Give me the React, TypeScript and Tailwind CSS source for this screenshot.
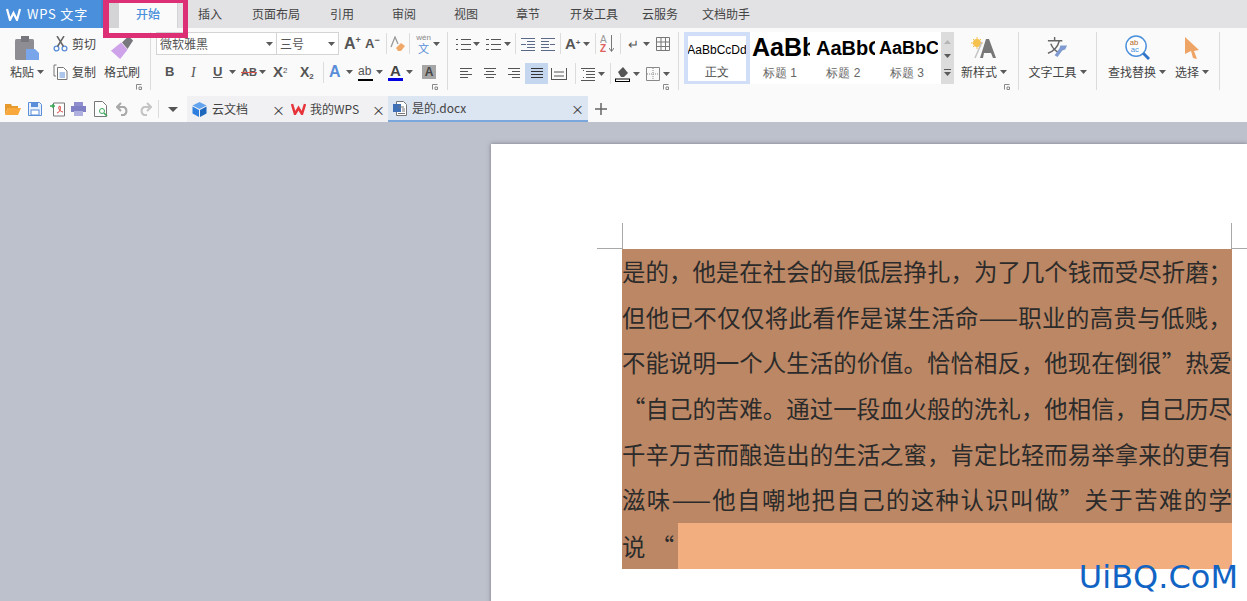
import React from "react";

const Caret = ({ className = "" }: { className?: string }) => (
  <svg width="7" height="4" viewBox="0 0 7 4" className={"shrink-0 " + className}><path d="M0 0h7L3.5 4z" fill="#5a5a5a" /></svg>
);

const Launcher = ({ className }: { className: string }) => (
  <svg width="6" height="6" viewBox="0 0 6 6" className={"absolute " + className}><path d="M.5 5.5v-5h5M3 3h2.5v2.5H3z" fill="none" stroke="#888" /></svg>
);

const VDiv = () => <div className="w-px h-[21px] bg-[#dcdcdc] shrink-0" />;

const Lines = ({ rows, w = 14, color = "#555" }: { rows: [number, number, number][]; w?: number; color?: string }) => (
  <svg width={w} height="14" viewBox={`0 0 ${w} 14`}>
    {rows.map(([x, y, l], i) => <rect key={i} x={x} y={y} width={l} height="1" fill={color} />)}
  </svg>
);

const tabs: [string, string][] = [
  ["插入", "w-[64px]"], ["页面布局", "w-[68px]"], ["引用", "w-[64px]"], ["审阅", "w-[60px]"], ["视图", "w-[64px]"],
  ["章节", "w-[60px]"], ["开发工具", "w-[72px]"], ["云服务", "w-[60px]"], ["文档助手", "w-[72px]"],
];

const doc = [
  "是的\uFF0C他是在社会的最低层挣扎\uFF0C为了几个钱而受尽折磨\uFF1B",
  "但他已不仅仅将此看作是谋生活命\u2014\u2014职业的高贵与低贱\uFF0C",
  "不能说明一个人生活的价值\u3002恰恰相反\uFF0C他现在倒很\u201D热爱",
  "\u201C自己的苦难\u3002通过一段血火般的洗礼\uFF0C他相信\uFF0C自己历尽",
  "千辛万苦而酿造出的生活之蜜\uFF0C肯定比轻而易举拿来的更有",
  "滋味\u2014\u2014他自嘲地把自己的这种认识叫做\u201D关于苦难的学",
];

function TitleBar() {
  return (
    <div className="h-[28px] bg-[#e2e2e4] flex shrink-0 text-[12px] text-[#444]">
      <div className="w-[101px] bg-[#4a8fdb] flex items-center pl-[6px] gap-[6px] text-white text-[13px]">
        <svg width="15" height="13" viewBox="0 0 15 13"><path d="M1 1l3 11 3.5-7L11 12l3-11" fill="none" stroke="#fff" strokeWidth="2.2" /></svg>
        <span className="tracking-[0.8px] whitespace-nowrap">WPS 文字</span>
      </div>
      <div className="w-[8px] bg-[#4584cf]" />
      <div className="w-[10px] bg-[#d4d4d6]" />
      <div className="w-[58px] bg-[#fafafa] flex items-center justify-center text-[#4a8fdb] font-medium">开始</div>
      <div className="w-[1px] bg-[#d4d4d6]" />
      {tabs.map(([t, w]) => (
        <div key={t} className={w + " flex items-center justify-center"}>{t}</div>
      ))}
    </div>
  );
}

function Clipboard() {
  return (
    <div className="relative w-[151px] h-[58px] border-r border-[#dcdcdc] flex shrink-0 pl-[8px] text-[12px]">
      <div className="w-[38px] flex flex-col items-center">
        <svg width="24" height="24" viewBox="0 0 24 24" className="mt-[4px]">
          <rect x="0" y="3" width="19" height="21" rx="1.5" fill="#8d8d93" />
          <rect x="6" y="0" width="8" height="6" fill="#77777d" />
          <path d="M11 13h9l4 4v7H11z" fill="#79a5ea" />
        </svg>
        <div className="flex items-center gap-[3px] mt-[3px] h-[18px]">粘贴<Caret /></div>
      </div>
      <div className="ml-[7px] w-[45px] flex flex-col">
        <div className="flex items-center h-[22px] mt-[1px] gap-[4px]">
          <svg width="15" height="16" viewBox="0 0 15 16">
            <circle cx="3.5" cy="12.5" r="2.4" fill="none" stroke="#5a8ed8" strokeWidth="1.3" />
            <circle cx="11.5" cy="12.5" r="2.4" fill="none" stroke="#5a8ed8" strokeWidth="1.3" />
            <path d="M4.5 10.5L11 0M10.5 10.5L4 0" stroke="#666" strokeWidth="1.5" />
          </svg>
          <span>剪切</span>
        </div>
        <div className="flex items-center h-[22px] mt-[6px] gap-[4px]">
          <svg width="15" height="16" viewBox="0 0 15 16">
            <path d="M3.5 1H1v11h2" fill="none" stroke="#777" />
            <path d="M4.5 3.5h6l3.5 3.5v8.5H4.500z" fill="#fff" stroke="#777" />
            <path d="M6.500 9h5.500M6.500 11h5.500M6.500 13h5.500" stroke="#5a8ed8" />
          </svg>
          <span>复制</span>
        </div>
      </div>
      <div className="ml-[6px] w-[36px] flex flex-col items-center">
        <svg width="24" height="24" viewBox="0 0 26 26" className="mt-[4px]">
          <path d="M1 16L12 7l7 8-8 10z" fill="#cfa3ea" />
          <path d="M13 7l7-7 5 5-6 9z" fill="#77777d" />
        </svg>
        <div className="mt-[3px] h-[18px] flex items-center whitespace-nowrap">格式刷</div>
      </div>
      <Launcher className="right-[8px] bottom-0" />
    </div>
  );
}

function FontGroup() {
  return (
    <div className="relative w-[297px] h-[58px] border-r border-[#dcdcdc] pl-[5px] shrink-0 text-[#555]">
      <div className="flex items-center h-[23px]">
        <div className="w-[121px] h-[23px] bg-white border border-[#d4d4d4] flex items-center justify-between pl-[3px] pr-[3px] text-[12px]">微软雅黑<Caret /></div>
        <div className="w-[62px] h-[23px] bg-white border border-l-0 border-[#d4d4d4] flex items-center justify-between pl-[3px] pr-[3px] text-[12px]">三号<Caret /></div>
        <div className="w-[21px] ml-[5px] font-['Liberation_Sans',sans-serif] text-[16px] font-bold flex items-start leading-[16px]">A<span className="text-[9px] leading-[8px]">+</span></div>
        <div className="w-[21px] font-['Liberation_Sans',sans-serif] text-[13px] font-bold flex items-start leading-[16px]">A<span className="text-[9px] leading-[8px]">−</span></div>
        <VDiv />
        <svg width="16" height="16" viewBox="0 0 16 16" className="ml-[3px]"><path d="M1 11L5 1l3 7" fill="none" stroke="#999" strokeWidth="1.3" /><path d="M6 12l5-5 4 3-4 5H8z" fill="#f0a868" /></svg>
        <div className="ml-[3px]"><VDiv /></div>
        <div className="ml-[5px] w-[17px] flex flex-col items-center leading-none">
          <span className="text-[8px] leading-[9px] font-['Liberation_Sans',sans-serif] text-[#888]">wén</span>
          <span className="text-[11px] leading-[12px] text-[#5a8ed8]">文</span>
        </div>
        <Caret className="ml-[1px]" />
      </div>
      <div className="flex items-center h-[22px] mt-[6px] text-[13px] font-['Liberation_Sans',sans-serif]">
        <span className="w-[26px] pl-[9px] font-bold">B</span>
        <span className="w-[25px] pl-[9px] italic font-['Liberation_Serif',serif] text-[14px]">I</span>
        <span className="w-[22px] pl-[6px] underline font-bold">U</span>
        <Caret />
        <span className="w-[23px] pl-[5px] text-[11px] font-bold line-through decoration-[#d9534f]">AB</span>
        <Caret />
        <span className="w-[29px] pl-[7px] font-bold text-[15px] whitespace-nowrap">X<sup className="text-[8px] font-normal">2</sup></span>
        <span className="w-[23px] pl-[5px] font-bold text-[14px] whitespace-nowrap">X<sub className="text-[8px]">2</sub></span>
        <span className="ml-[5px]"><VDiv /></span>
        <span className="w-[19px] pl-[5px] font-bold text-[16px] text-[#5a8ed8]">A</span>
        <Caret className="ml-[3px]" />
        <span className="w-[15px] text-[12px] border-b-2 border-black h-[17px] leading-[14px] ml-[5px]">ab</span>
        <Caret className="ml-[3px]" />
        <span className="w-[15px] ml-[5px] flex flex-col leading-[15px] font-bold text-[15px] text-[#444] items-center">A<span className="block w-[15px] h-[3px] bg-[#0000e0]" /></span>
        <Caret className="ml-[3px]" />
        <span className="ml-[9px] w-[14px] h-[14px] bg-[#a6a6a6] flex items-center justify-center font-bold text-[12px] text-[#444]">A</span>
      </div>
      <Launcher className="right-[9px] bottom-0" />
    </div>
  );
}

function ParaGroup() {
  return (
    <div className="relative w-[231px] h-[58px] border-r border-[#dcdcdc] pl-[8px] shrink-0">
      <div className="flex items-center h-[23px]">
        <Lines w={15} rows={[[0,2,2],[5,2,10],[0,7,2],[5,7,10],[0,12,2],[5,12,10]]} />
        <Caret className="ml-[2px]" />
        <div className="w-[6px]" />
        <Lines w={15} rows={[[0,2,3],[5,2,10],[0,7,3],[5,7,10],[0,12,3],[5,12,10]]} />
        <Caret className="ml-[3px]" />
        <div className="w-[4px]" />
        <VDiv />
        <div className="w-[5px]" />
        <Lines w={14} rows={[[0,1,14],[6,4,8],[0,7,5],[6,7,8],[6,10,8],[0,13,14]]} color="#5a6a88" />
        <div className="w-[6px]" />
        <Lines w={14} rows={[[0,1,14],[0,4,8],[9,7,5],[0,7,8],[0,10,8],[0,13,14]]} color="#5a6a88" />
        <div className="w-[5px]" />
        <VDiv />
        <span className="w-[20px] pl-[4px] font-['Liberation_Sans',sans-serif] font-bold text-[15px] text-[#555] leading-none whitespace-nowrap">A<sup className="text-[8px]">+</sup></span>
        <Caret className="ml-[2px]" />
        <div className="w-[5px]" />
        <VDiv />
        <span className="w-[24px] pl-[4px] flex items-center gap-[2px] font-['Liberation_Sans',sans-serif]">
          <span className="flex flex-col text-[10px] leading-[9px]"><span className="text-[#999]">A</span><span className="text-[#e06060] font-bold">Z</span></span>
          <svg width="5" height="17" viewBox="0 0 5 17"><path d="M2.500 0v16M0 13l2.500 3.500L5 13" fill="none" stroke="#777" /></svg>
        </span>
        <VDiv />
        <span className="w-[13px] ml-[7px] text-[13px] text-[#555] leading-none">↵</span>
        <Caret className="ml-[2px]" />
        <svg width="14" height="14" viewBox="0 0 14 14" className="ml-[6px]"><path d="M.5 .5h13v13H.5zM.5 5h13M.5 9.500h13M5 .5v13M9.500 .5v13" fill="none" stroke="#777" /></svg>
      </div>
      <div className="flex items-center h-[21px] mt-[8px]">
        <div className="w-[4px]" />
        <Lines w={12} rows={[[0,1,12],[0,4,8],[0,7,12],[0,10,8]]} />
        <div className="w-[12px]" />
        <Lines w={12} rows={[[0,1,12],[2,4,8],[0,7,12],[2,10,8]]} />
        <div className="w-[12px]" />
        <Lines w={12} rows={[[0,1,12],[4,4,8],[0,7,12],[4,10,8]]} />
        <div className="w-[5px]" />
        <div className="w-[23px] h-[21px] bg-[#c5d7ee] flex items-center justify-center">
          <Lines w={12} rows={[[0,1,12],[0,4,12],[0,7,12],[0,10,12]]} color="#333" />
        </div>
        <div className="w-[3px]" />
        <svg width="16" height="14" viewBox="0 0 16 14"><path d="M.5 1v12M15.500 1v12M1 12.500h14M3 5h10M3 9h10" stroke="#555" fill="none" /></svg>
        <div className="w-[8px]" />
        <VDiv />
        <div className="w-[5px]" />
        <Lines w={14} rows={[[0,1,14],[5,4,9],[5,7,9],[5,10,9],[0,13,14],[2,3,1],[2,10,1]]} />
        <Caret className="ml-[3px]" />
        <div className="w-[5px]" />
        <VDiv />
        <div className="w-[4px]" />
        <svg width="15" height="17" viewBox="0 0 15 17"><path d="M3 7l5-5 5 6-4 4H6z" fill="#555" /><rect x=".5" y="14" width="14" height="2.500" fill="#fff" stroke="#000" /></svg>
        <Caret className="ml-[3px]" />
        <div className="w-[6px]" />
        <svg width="14" height="14" viewBox="0 0 14 14"><path d="M.5 .5h13v13H.5z" fill="none" stroke="#888" /><path d="M7 1v12M1 7h12" stroke="#888" strokeDasharray="1 1" /></svg>
        <Caret className="ml-[3px]" />
      </div>
      <Launcher className="right-[9px] bottom-0" />
    </div>
  );
}

function Gallery() {
  return (
    <div className="w-[270px] h-[52px] ml-[5px] bg-white flex shrink-0 font-['Liberation_Sans',sans-serif]">
      <div className="w-[66px] h-[52px] border-[4px] border-b-[3px] border-[#d0dff7] flex flex-col items-center overflow-hidden text-black">
        <div className="h-[28px] flex items-center text-[12px] whitespace-nowrap">AaBbCcDd</div>
        <div className="h-[16px] flex items-center text-[12px] text-[#444]">正文</div>
      </div>
      <div className="w-[65px] pl-[2px] flex flex-col overflow-hidden">
        <div className="h-[32px] w-[58px] overflow-hidden flex items-center text-[25px] font-bold text-black whitespace-nowrap">AaBb</div>
        <div className="h-[18px] flex items-center justify-center pr-[7px] text-[12px] text-[#666]">标题 1</div>
      </div>
      <div className="w-[64px] pl-[1px] flex flex-col overflow-hidden">
        <div className="h-[32px] w-[59px] overflow-hidden flex items-center text-[20px] font-bold text-black whitespace-nowrap">AaBbC</div>
        <div className="h-[18px] flex items-center justify-center pr-[8px] text-[12px] text-[#666]">标题 2</div>
      </div>
      <div className="w-[62px] flex flex-col overflow-hidden">
        <div className="h-[32px] w-[59px] overflow-hidden flex items-center text-[18px] font-bold text-black whitespace-nowrap">AaBbC</div>
        <div className="h-[18px] flex items-center justify-center pr-[6px] text-[12px] text-[#666]">标题 3</div>
      </div>
      <div className="w-[13px] bg-[#dcdcdc] flex flex-col items-center justify-around py-[3px]">
        <svg width="7" height="4" viewBox="0 0 7 4"><path d="M0 4h7L3.500 0z" fill="#b5b5b5" /></svg>
        <Caret />
        <svg width="7" height="7" viewBox="0 0 7 7"><path d="M0 0h7v1H0zM0 3h7L3.500 7z" fill="#5a5a5a" /></svg>
      </div>
    </div>
  );
}

function BigTool({ label, icon, className }: { label: string; icon: React.ReactNode; className: string }) {
  return (
    <div className={className + " flex flex-col items-center shrink-0"}>
      <div className="h-[27px] mt-[2px] flex items-center justify-center">{icon}</div>
      <div className="h-[18px] mt-[2px] flex items-center gap-[3px] whitespace-nowrap">{label}<Caret /></div>
    </div>
  );
}

function Ribbon() {
  return (
    <div className="h-[68px] bg-[#fafafa] flex shrink-0 pt-[4px] text-[12px] text-[#444] font-['Noto_Sans_CJK_SC',sans-serif]">
      <Clipboard />
      <FontGroup />
      <ParaGroup />
      <Gallery />
      <div className="relative w-[65px] h-[58px] border-r border-[#dcdcdc] pl-[5px] shrink-0">
        <BigTool label="新样式" className="w-[50px]" icon={
          <svg width="26" height="22" viewBox="0 0 26 22"><circle cx="6" cy="6" r="4" fill="#f6c24f" /><path d="M6 0v12M0 6h12M2 2l8 8M10 2L2 10" stroke="#f6c24f" /><path d="M4 21l7-16" stroke="#c4c4c4" strokeWidth="1.500" /><path d="M9 21l6-19h3l7 19h-3l-2-5h-7l-1 5z" fill="#777" /></svg>
        } />
        <Launcher className="right-[8px] bottom-0" />
      </div>
      <div className="w-[78px] h-[58px] border-r border-[#dcdcdc] shrink-0">
        <BigTool label="文字工具" className="w-[77px]" icon={
          <svg width="23" height="23" viewBox="0 0 24 24"><path d="M2 5h15M9 1v4M14 5C12 12 8 16 2 18M5 8c2 5 5 8 9 9" fill="none" stroke="#666" strokeWidth="1.5" /><path d="M22 10l-2 4-3 1-5 7-3-2 5-7 1-3z" fill="#7f9bd1" /></svg>
        } />
      </div>
      <div className="w-[123px] h-[58px] border-r border-[#dcdcdc] flex shrink-0 pl-[9px]">
        <BigTool label="查找替换" className="w-[62px]" icon={
          <svg width="25" height="25" viewBox="0 0 26 26"><circle cx="11.500" cy="11.500" r="10.500" fill="#fff" stroke="#4a8fdb" strokeWidth="1.500" /><path d="M19 19l6 6" stroke="#2f75c8" strokeWidth="3" /><text x="5" y="10" fontSize="8" fill="#b5651d" fontFamily="Liberation Sans">ab</text><text x="6" y="18" fontSize="8" fill="#4a8fdb" fontFamily="Liberation Sans">ac</text></svg>
        } />
        <BigTool label="选择" className="w-[36px] ml-[6px]" icon={
          <svg width="16" height="24" viewBox="0 0 16 24"><path d="M1 1l14 13-5 1 3 8-4-1-2-7-6 3z" fill="#eea465" /></svg>
        } />
      </div>
    </div>
  );
}

function QuickBar() {
  return (
    <div className="h-[26px] bg-[#fafafa] flex items-center shrink-0 text-[12px] text-[#444] font-['Noto_Sans_CJK_SC',sans-serif]">
      <div className="w-[5px]" />
      <svg width="16" height="14" viewBox="0 0 16 14"><path d="M0 2h6l1 2h6v2H3L0 13z" fill="#e69a2e" /><path d="M3 6h13l-3 7H0z" fill="#f9a93b" /></svg>
      <div className="w-[7px]" />
      <svg width="14" height="14" viewBox="0 0 14 14"><path d="M.5 .5h11l2 2v11H.5z" fill="#e8f0fb" stroke="#5a8ed8" /><rect x="3" y="1" width="7" height="4" fill="#5a8ed8" /><rect x="3" y="8" width="8" height="5" fill="#fff" stroke="#5a8ed8" /></svg>
      <div className="w-[8px]" />
      <svg width="15" height="15" viewBox="0 0 15 15"><path d="M3.500 1h11v13h-11z" fill="#fff" stroke="#777" /><path d="M0 4h5M3 2v4" stroke="#3aa655" strokeWidth="1.500" /><path d="M7 11c3-1 4-4 3-7-2 0-2 5 3 6" fill="none" stroke="#d9403a" /></svg>
      <div className="w-[6px]" />
      <svg width="15" height="14" viewBox="0 0 15 14"><rect x="3" y="0" width="9" height="4" fill="#8f8fd0" /><rect x="0" y="4" width="15" height="6" fill="#8080c4" /><rect x="3" y="9" width="9" height="5" fill="#b0b0e0" /></svg>
      <div className="w-[8px]" />
      <svg width="14" height="16" viewBox="0 0 14 16"><path d="M.5 .5h8l4 4v11H.5z" fill="#fff" stroke="#777" /><circle cx="8" cy="10" r="2.500" fill="none" stroke="#3aa655" /><path d="M10 12l3 3" stroke="#3aa655" strokeWidth="1.500" /></svg>
      <div className="w-[8px]" />
      <svg width="14" height="14" viewBox="0 0 14 14"><path d="M5 1L1 5l4 4M1 5h7a4.500 4.500 0 010 8H5" fill="none" stroke="#a8a8a8" strokeWidth="2" /></svg>
      <div className="w-[8px]" />
      <svg width="14" height="14" viewBox="0 0 14 14"><path d="M9 1l4 4-4 4M13 5H6a4.500 4.500 0 000 8h3" fill="none" stroke="#c4c4c4" strokeWidth="2" /></svg>
      <div className="w-[6px]" />
      <div className="w-px h-[18px] bg-[#dcdcdc]" />
      <div className="w-[9px]" />
      <svg width="10" height="5" viewBox="0 0 10 5"><path d="M0 0h10L5 5z" fill="#555" /></svg>
      <div className="w-[9px]" />
      <div className="w-[98px] h-full bg-[#f1f1f3] flex items-center pl-[5px] gap-[5px]">
        <svg width="15" height="15" viewBox="0 0 15 15"><path d="M7.500 0l7 3.500-7 3.500-7-3.500z" fill="#63a4ef" /><path d="M.5 4.500l6.500 3.500v7l-6.500-3.500z" fill="#2f7fde" /><path d="M14.500 4.500l-6.500 3.500v7l6.500-3.500z" fill="#1f66bd" /></svg>
        <span className="w-[55px]">云文档</span>
        <span className="text-[13px] leading-none text-[#333]">×</span>
      </div>
      <div className="w-[103px] h-full bg-[#f1f1f3] flex items-center pl-[6px] gap-[4px]">
        <svg width="15" height="12" viewBox="0 0 15 12"><path d="M1 1l3 10 3.500-6L11 11l3-10" fill="none" stroke="#e6343a" strokeWidth="2.500" /></svg>
        <span className="w-[58px] whitespace-nowrap">我的WPS</span>
        <span className="text-[13px] leading-none text-[#333]">×</span>
      </div>
      <div className="w-[200px] h-full bg-[#dce5f2] border-b-2 border-[#7ba7dc] flex items-center pl-[5px] gap-[5px]">
        <svg width="14" height="15" viewBox="0 0 14 15"><path d="M3.500 .5h7l3 3v11h-10z" fill="#fff" stroke="#777" /><rect x="0" y="3" width="8" height="8" fill="#3f6fb5" /><path d="M5 6h6M9 8h3M9 10h3M5 12.500h7" stroke="#777" /></svg>
        <span className="w-[154px]">是的.docx</span>
        <span className="text-[13px] leading-none text-[#333]">×</span>
      </div>
      <div className="w-[7px]" />
      <svg width="12" height="12" viewBox="0 0 12 12"><path d="M6 0v12M0 6h12" stroke="#666" strokeWidth="1.500" /></svg>
    </div>
  );
}

function Canvas() {
  return (
    <div className="relative flex-1 min-h-0 bg-[#bdc1cb] pl-[491px] pt-[22px] overflow-hidden">
      <div className="relative h-[600px] bg-white shadow-[0_0_4px_rgba(90,90,100,0.7)] pl-[131px] pr-[15px] pt-[105px]">
        <div className="absolute left-[131px] top-[79px] w-px h-[26px] bg-[#a8a8a8]" />
        <div className="absolute left-[106px] top-[104px] w-[25px] h-px bg-[#a8a8a8]" />
        <div className="absolute right-[15px] top-[79px] w-px h-[26px] bg-[#a8a8a8]" />
        <div className="absolute right-0 top-[104px] w-[15px] h-px bg-[#a8a8a8]" />
        <div className="w-[610px] bg-[#bc8764] text-[#2b2b2b] text-[23.4px] font-['Noto_Sans_CJK_SC',sans-serif]">
          {doc.map((l) => (
            <div key={l} className="h-[45.7px] leading-[45.7px] text-justify [text-align-last:justify] overflow-hidden">{l}</div>
          ))}
          <div className="h-[46px] leading-[46px] flex">
            <div className="w-[56px] whitespace-nowrap">说 {"\u201C"}</div>
            <div className="flex-1 bg-[#f3ae7f]" />
          </div>
        </div>
      </div>
      <div className="absolute right-[9px] bottom-[6px] text-[32px] leading-[36px] text-[#1164c4] font-['DejaVu_Sans',sans-serif]">UiBQ.CoM</div>
    </div>
  );
}

export default function App() {
  return (
    <div className="relative w-[1247px] h-[601px] overflow-hidden flex flex-col font-['Noto_Sans_CJK_SC',sans-serif]">
      <TitleBar />
      <Ribbon />
      <QuickBar />
      <Canvas />
      <div className="absolute left-[103px] top-0 w-[85px] h-[38px] border-l-[6px] border-r-[5px] border-b-[5px] border-t-[3px] border-[#dc2f76]" />
    </div>
  );
}
